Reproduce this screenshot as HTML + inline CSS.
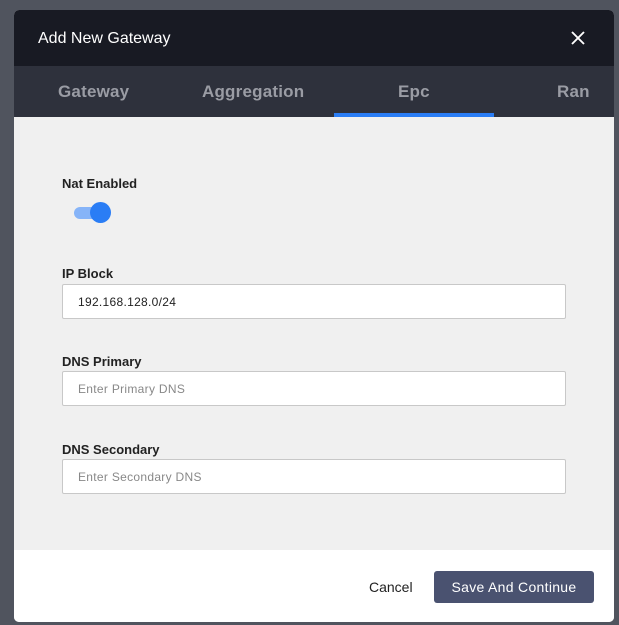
<!DOCTYPE html>
<html><head><style>
*{box-sizing:border-box;margin:0;padding:0}
body{width:619px;height:625px;background:#50545e;font-family:"Liberation Sans",sans-serif;position:relative;overflow:hidden}
.m{position:absolute;left:14px;top:10px;width:600px;height:612px;border-radius:5px;overflow:hidden;background:#f0f0f0}
.h{height:56px;background:#181a23;color:#fff;font-size:16px;padding:20px 0 0 24px;position:relative}
.x{position:absolute;right:26px;top:18px}
.t{height:51px;background:#2e313c;position:relative}
.t span{position:absolute;top:16px;font-size:17px;font-weight:bold;color:#9a9ca4;letter-spacing:.2px}
.ind{position:absolute;left:320px;width:160px;bottom:0;height:4px;background:#2a7df5}
.lbl{position:absolute;left:48px;font-size:13px;font-weight:bold;color:#222}
.in{position:absolute;left:48px;width:504px;height:35px;background:#fff;border:1px solid #c8c8c8;border-radius:2px;font-size:12px;padding:10px 15px;color:#222;letter-spacing:.3px}
.ph{color:#888}
.f{position:absolute;left:0;top:540px;width:600px;height:72px;background:#fff}
.btn{position:absolute;left:420px;top:21px;width:160px;height:32px;background:#4a5270;border-radius:3px;color:#fff;font-size:14px;text-align:center;line-height:32px;letter-spacing:.3px}
</style></head><body>
<div class="m">
<div class="h">Add New Gateway
<svg class="x" width="20" height="20" viewBox="0 0 20 20"><path d="M4 4L16 16M16 4L4 16" stroke="#fff" stroke-width="1.9"/></svg></div>
<div class="t"><span style="left:44px">Gateway</span><span style="left:188px">Aggregation</span><span style="left:384px">Epc</span><span style="left:543px">Ran</span><div class="ind"></div></div>
<div class="lbl" style="top:166px">Nat Enabled</div>
<div style="position:absolute;left:60px;top:197px;width:32px;height:12px;border-radius:6px;background:#86b4f8"></div>
<div style="position:absolute;left:76px;top:192px;width:21px;height:21px;border-radius:50%;background:#2a7df5"></div>
<div class="lbl" style="top:256px">IP Block</div>
<div class="in" style="top:274px">192.168.128.0/24</div>
<div class="lbl" style="top:344px">DNS Primary</div>
<div class="in ph" style="top:361px">Enter Primary DNS</div>
<div class="lbl" style="top:432px">DNS Secondary</div>
<div class="in ph" style="top:449px">Enter Secondary DNS</div>
<div class="f"><span style="position:absolute;left:355px;top:29px;font-size:14px;color:#222">Cancel</span><div class="btn">Save And Continue</div></div>
</div>
</body></html>
